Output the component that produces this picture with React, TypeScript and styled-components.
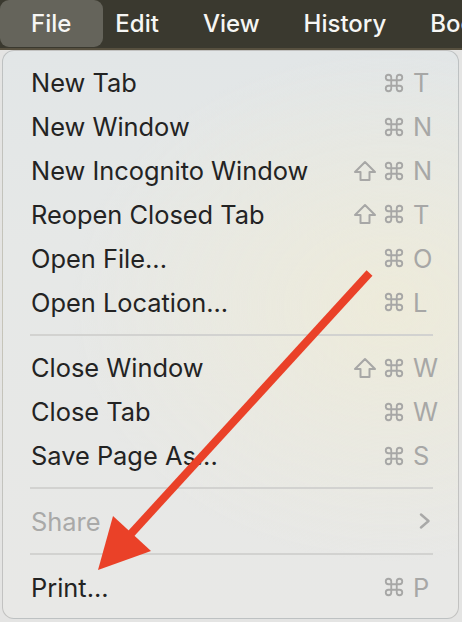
import React from 'react';
import styled, { createGlobalStyle } from 'styled-components';

const GlobalStyle = createGlobalStyle`
  html, body {
    margin: 0;
    padding: 0;
    background: #e4e4e3;
  }
  body {
    width: 462px;
    height: 622px;
    overflow: hidden;
    font-family: 'Inter', 'Noto Sans', 'DejaVu Sans', sans-serif;
  }
`;

const Screen = styled.div`
  position: relative;
  width: 462px;
  height: 622px;
  display: flex;
  flex-direction: column;
`;

const MenuBar = styled.div`
  height: 48px;
  display: flex;
  align-items: flex-start;
  background: #3a392f;
  border-bottom: 2px solid #57503f;
  overflow: hidden;
`;

const MenuBarItem = styled.div<{ $active?: boolean }>`
  display: flex;
  align-items: center;
  padding: ${p => (p.$active ? '0 32px 0 31px' : '0 22px')};
  margin-right: ${p => (p.$active ? '-10px' : '0')};
  height: 47px;
  border-radius: 9px;
  background: ${p => (p.$active ? '#65645b' : 'transparent')};
  color: #f6f6f4;
  font-size: 24px;
  font-weight: 500;
  white-space: nowrap;
`;

const Panel = styled.div`
  margin: 0 3px 0 2px;
  height: 569px;
  box-sizing: border-box;
  padding: 10px 0 9px;
  border-radius: 12px;
  border: 1px solid rgba(0, 0, 0, 0.16);
  background:
    radial-gradient(ellipse 70% 45% at 85% 45%, rgba(240, 236, 214, 0.75), rgba(240, 236, 214, 0) 100%),
    linear-gradient(180deg, #e2e6e7 0%, #e6e8e7 35%, #e8e8e6 100%);
  display: flex;
  flex-direction: column;
`;

const Row = styled.div<{ $disabled?: boolean }>`
  height: 44px;
  display: grid;
  grid-template-columns: 1fr auto 28px;
  column-gap: 8px;
  align-items: center;
  padding: 0 17px 0 28px;
  font-size: 25.4px;
  color: ${p => (p.$disabled ? '#a9a9a8' : '#232323')};
`;

const Label = styled.span`
  white-space: nowrap;
`;

const Modifiers = styled.span`
  display: flex;
  align-items: center;
  gap: 6px;
  justify-content: flex-end;
`;

const Key = styled.span`
  color: #a7a7a6;
`;

const Glyph = styled.svg`
  display: block;
`;

const Chevron = styled.svg`
  justify-self: end;
  margin-right: 10px;
`;

const Separator = styled.div`
  height: 22px;
  display: flex;
  align-items: center;
  padding: 0 25px 0 27px;
  &::after {
    content: '';
    flex: 1;
    height: 2px;
    background: #d2d2d0;
  }
`;

const ArrowOverlay = styled.svg`
  position: absolute;
  left: 0;
  top: 0;
  pointer-events: none;
`;

const ShiftIcon = () => (
  <Glyph width="24" height="22" viewBox="0 0 24 22">
    <path
      d="M12 2 L22 12 H16.5 V20 H7.5 V12 H2 Z"
      fill="none"
      stroke="#a7a7a6"
      strokeWidth="2"
      strokeLinejoin="round"
    />
  </Glyph>
);

const CommandIcon = () => (
  <Glyph width="22" height="22" viewBox="0 0 24 24">
    <path
      d="M15 6v12a3 3 0 1 0 3-3H6a3 3 0 1 0 3 3V6a3 3 0 1 0-3 3h12a3 3 0 1 0-3-3"
      fill="none"
      stroke="#a7a7a6"
      strokeWidth="2"
    />
  </Glyph>
);

type Item =
  | { kind: 'item'; label: string; shift?: boolean; key?: string; disabled?: boolean; submenu?: boolean }
  | { kind: 'sep' };

const items: Item[] = [
  { kind: 'item', label: 'New Tab', key: 'T' },
  { kind: 'item', label: 'New Window', key: 'N' },
  { kind: 'item', label: 'New Incognito Window', shift: true, key: 'N' },
  { kind: 'item', label: 'Reopen Closed Tab', shift: true, key: 'T' },
  { kind: 'item', label: 'Open File...', key: 'O' },
  { kind: 'item', label: 'Open Location...', key: 'L' },
  { kind: 'sep' },
  { kind: 'item', label: 'Close Window', shift: true, key: 'W' },
  { kind: 'item', label: 'Close Tab', key: 'W' },
  { kind: 'item', label: 'Save Page As...', key: 'S' },
  { kind: 'sep' },
  { kind: 'item', label: 'Share', disabled: true, submenu: true },
  { kind: 'sep' },
  { kind: 'item', label: 'Print...', key: 'P' },
];

function App() {
  return (
    <Screen>
      <GlobalStyle />
      <MenuBar>
        <MenuBarItem $active>File</MenuBarItem>
        <MenuBarItem>Edit</MenuBarItem>
        <MenuBarItem>View</MenuBarItem>
        <MenuBarItem>History</MenuBarItem>
        <MenuBarItem>Bookmarks</MenuBarItem>
      </MenuBar>

      <Panel>
        {items.map((item, i) =>
          item.kind === 'sep' ? (
            <Separator key={i} />
          ) : (
            <Row key={i} $disabled={item.disabled}>
              <Label>{item.label}</Label>
              {item.submenu ? (
                <>
                  <span />
                  <Chevron width="12" height="16" viewBox="0 0 12 16">
                    <path d="M2 1.5 L9.5 8 L2 14.5" fill="none" stroke="#a9a9a8" strokeWidth="2.4" strokeLinecap="round" strokeLinejoin="round" />
                  </Chevron>
                </>
              ) : (
                <>
                  <Modifiers>
                    {item.shift && <ShiftIcon />}
                    <CommandIcon />
                  </Modifiers>
                  <Key>{item.key}</Key>
                </>
              )}
            </Row>
          )
        )}
      </Panel>

      <ArrowOverlay width="462" height="622" viewBox="0 0 462 622">
        <line x1="369.5" y1="273" x2="128" y2="537" stroke="#ea4128" strokeWidth="8" />
        <polygon points="98,570 113,516 151,551" fill="#ea4128" />
      </ArrowOverlay>
    </Screen>
  );
}

export default App;
